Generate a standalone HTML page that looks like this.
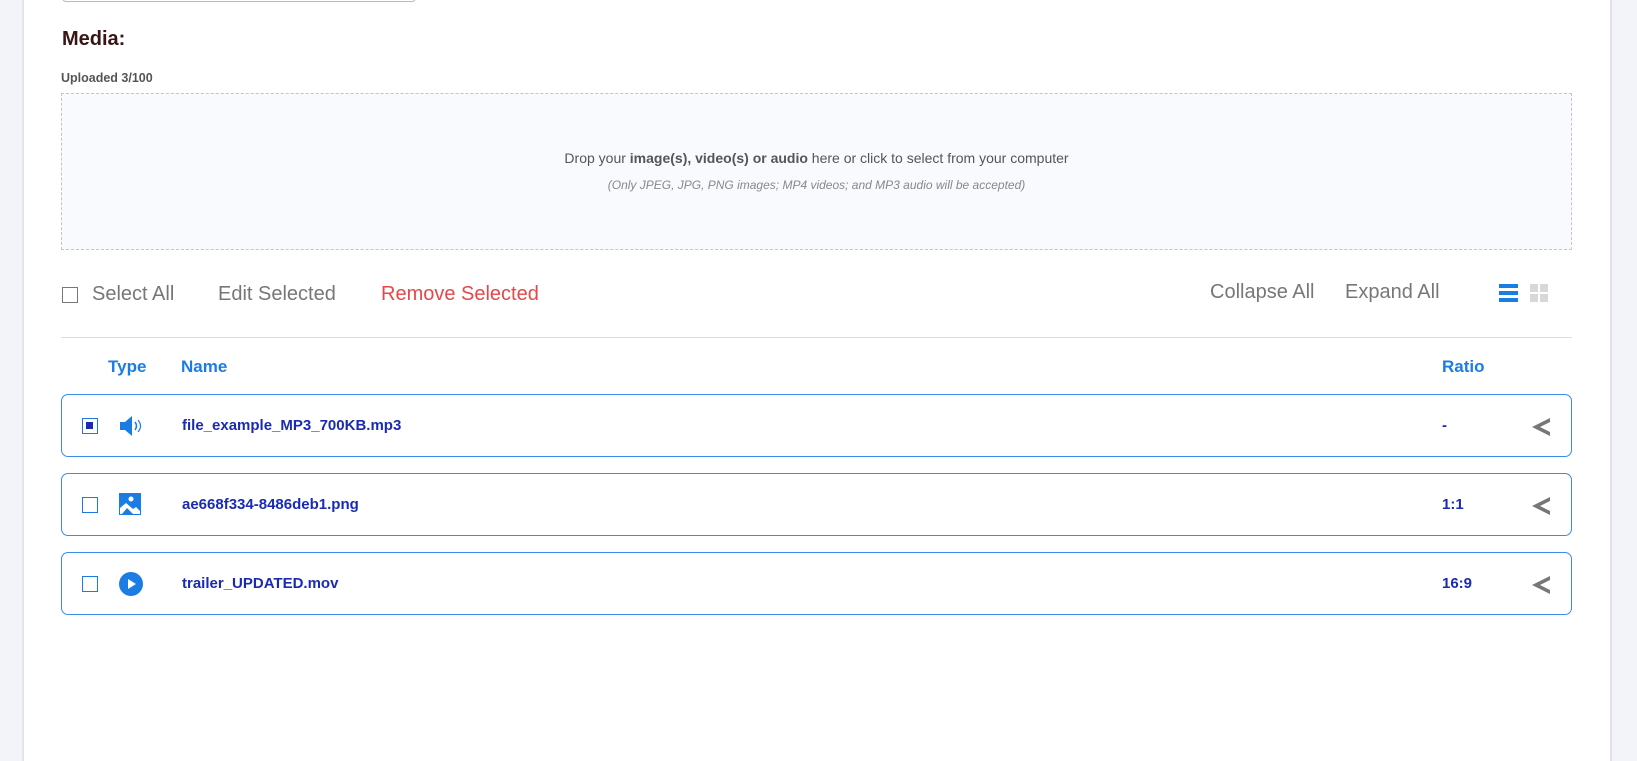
<!DOCTYPE html>
<html><head><meta charset="utf-8"><style>
*{box-sizing:border-box;margin:0;padding:0}
body{width:1637px;height:761px;overflow:hidden;background:#f3f4fa;font-family:"Liberation Sans",Arial,sans-serif;position:relative}
.card{position:absolute;left:22px;top:0;width:1590px;height:761px;background:#fff;border-left:2px solid #e2e4ee;border-right:2px solid #dfe1ec}
.abs{position:absolute;white-space:nowrap}
.topinput{position:absolute;left:62px;top:-10px;width:354px;height:12px;border:1px solid #bbb;border-radius:4px}
.drop{position:absolute;left:61px;top:93px;width:1511px;height:157px;background:#f9fafe;border:1px dashed #c4c4d0}
.cb{position:absolute;width:16px;height:16px;border:1.5px solid #1c7ae0;background:#fff}
.tb{font-size:20px;color:#777}
.hd{font-size:17px;font-weight:bold;color:#1b7de3}
.row{position:absolute;left:61px;width:1511px;height:63px;border:1.3px solid #3a8de8;border-radius:7px}
.nm{position:absolute;left:120px;top:22px;font-size:15px;font-weight:bold;color:#1a2bb3}
.rt{position:absolute;left:1380px;top:22px;font-size:15px;font-weight:bold;color:#1a2bb3}
.arr{position:absolute;left:1468px;top:21px}
</style></head><body>
<div class="card"></div>
<div class="topinput"></div>
<div class="abs" style="left:62px;top:28px;font-size:20px;font-weight:bold;color:#3a1515">Media:</div>
<div class="abs" style="left:61px;top:71px;font-size:12.5px;font-weight:bold;color:#555">Uploaded 3/100</div>
<div class="drop">
 <div class="abs" style="left:0;right:0;top:56px;text-align:center;font-size:14px;color:#555">Drop your <b>image(s), video(s) or audio</b> here or click to select from your computer</div>
 <div class="abs" style="left:0;right:0;top:84px;text-align:center;font-size:12px;font-style:italic;color:#888">(Only JPEG, JPG, PNG images; MP4 videos; and MP3 audio will be accepted)</div>
</div>
<div class="cb" style="left:62px;top:287px;border-color:#777;border-width:1px"></div>
<div class="abs tb" style="left:92px;top:283px">Select All</div>
<div class="abs tb" style="left:218px;top:283px">Edit Selected</div>
<div class="abs tb" style="left:381px;top:283px;color:#e54848">Remove Selected</div>
<div class="abs tb" style="left:1210px;top:281px">Collapse All</div>
<div class="abs tb" style="left:1345px;top:281px">Expand All</div>
<svg class="abs" style="left:1499px;top:283px" width="19" height="19"><rect y="1" width="19" height="4" fill="#1b7de3"/><rect y="8" width="19" height="4" fill="#1b7de3"/><rect y="15" width="19" height="4" fill="#1b7de3"/></svg>
<svg class="abs" style="left:1530px;top:284px" width="18" height="18"><rect width="8" height="8" fill="#d8d8d8"/><rect x="10" width="8" height="8" fill="#d8d8d8"/><rect y="10" width="8" height="8" fill="#d8d8d8"/><rect x="10" y="10" width="8" height="8" fill="#d8d8d8"/></svg>
<div class="abs" style="left:61px;top:337px;width:1511px;height:1px;background:#ddd"></div>
<div class="abs hd" style="left:108px;top:357px">Type</div>
<div class="abs hd" style="left:181px;top:357px">Name</div>
<div class="abs hd" style="left:1442px;top:357px">Ratio</div>

<div class="row" style="top:394px">
 <div class="cb" style="left:20px;top:23px"><div style="position:absolute;left:3px;top:3px;width:7px;height:7px;background:#1a2bb3"></div></div>
 <svg style="position:absolute;left:57px;top:20px" width="24" height="22"><path d="M1 7h5l7-6v20l-7-6H1z" fill="#1b7de3"/><path d="M16 7q3 4 0 8" stroke="#1b7de3" stroke-width="1.6" fill="none"/><path d="M19 5q5 6 0 12" stroke="#1b7de3" stroke-width="1.2" fill="none"/></svg>
 <div class="nm">file_example_MP3_700KB.mp3</div>
 <div class="rt">-</div>
 <svg class="arr" width="22" height="22"><path d="M20 2L2 11l18 9v-4l-10-5 10-5z" fill="#777"/></svg>
</div>
<div class="row" style="top:473px">
 <div class="cb" style="left:20px;top:23px"></div>
 <svg style="position:absolute;left:57px;top:19px" width="22" height="22"><rect width="22" height="22" fill="#1b7de3"/><circle cx="12" cy="6" r="2.5" fill="#fff"/><path d="M1 21L1 15l6-5 7 6 3-2 4 4v3z" fill="#fff"/><path d="M3 21l5-6 6 6z" fill="#1b7de3"/></svg>
 <div class="nm">ae668f334-8486deb1.png</div>
 <div class="rt">1:1</div>
 <svg class="arr" width="22" height="22"><path d="M20 2L2 11l18 9v-4l-10-5 10-5z" fill="#777"/></svg>
</div>
<div class="row" style="top:552px">
 <div class="cb" style="left:20px;top:23px"></div>
 <svg style="position:absolute;left:57px;top:19px" width="24" height="24"><circle cx="12" cy="12" r="12" fill="#1b7de3"/><path d="M9 7v10l8-5z" fill="#fff"/></svg>
 <div class="nm">trailer_UPDATED.mov</div>
 <div class="rt">16:9</div>
 <svg class="arr" width="22" height="22"><path d="M20 2L2 11l18 9v-4l-10-5 10-5z" fill="#777"/></svg>
</div>
</body></html>
